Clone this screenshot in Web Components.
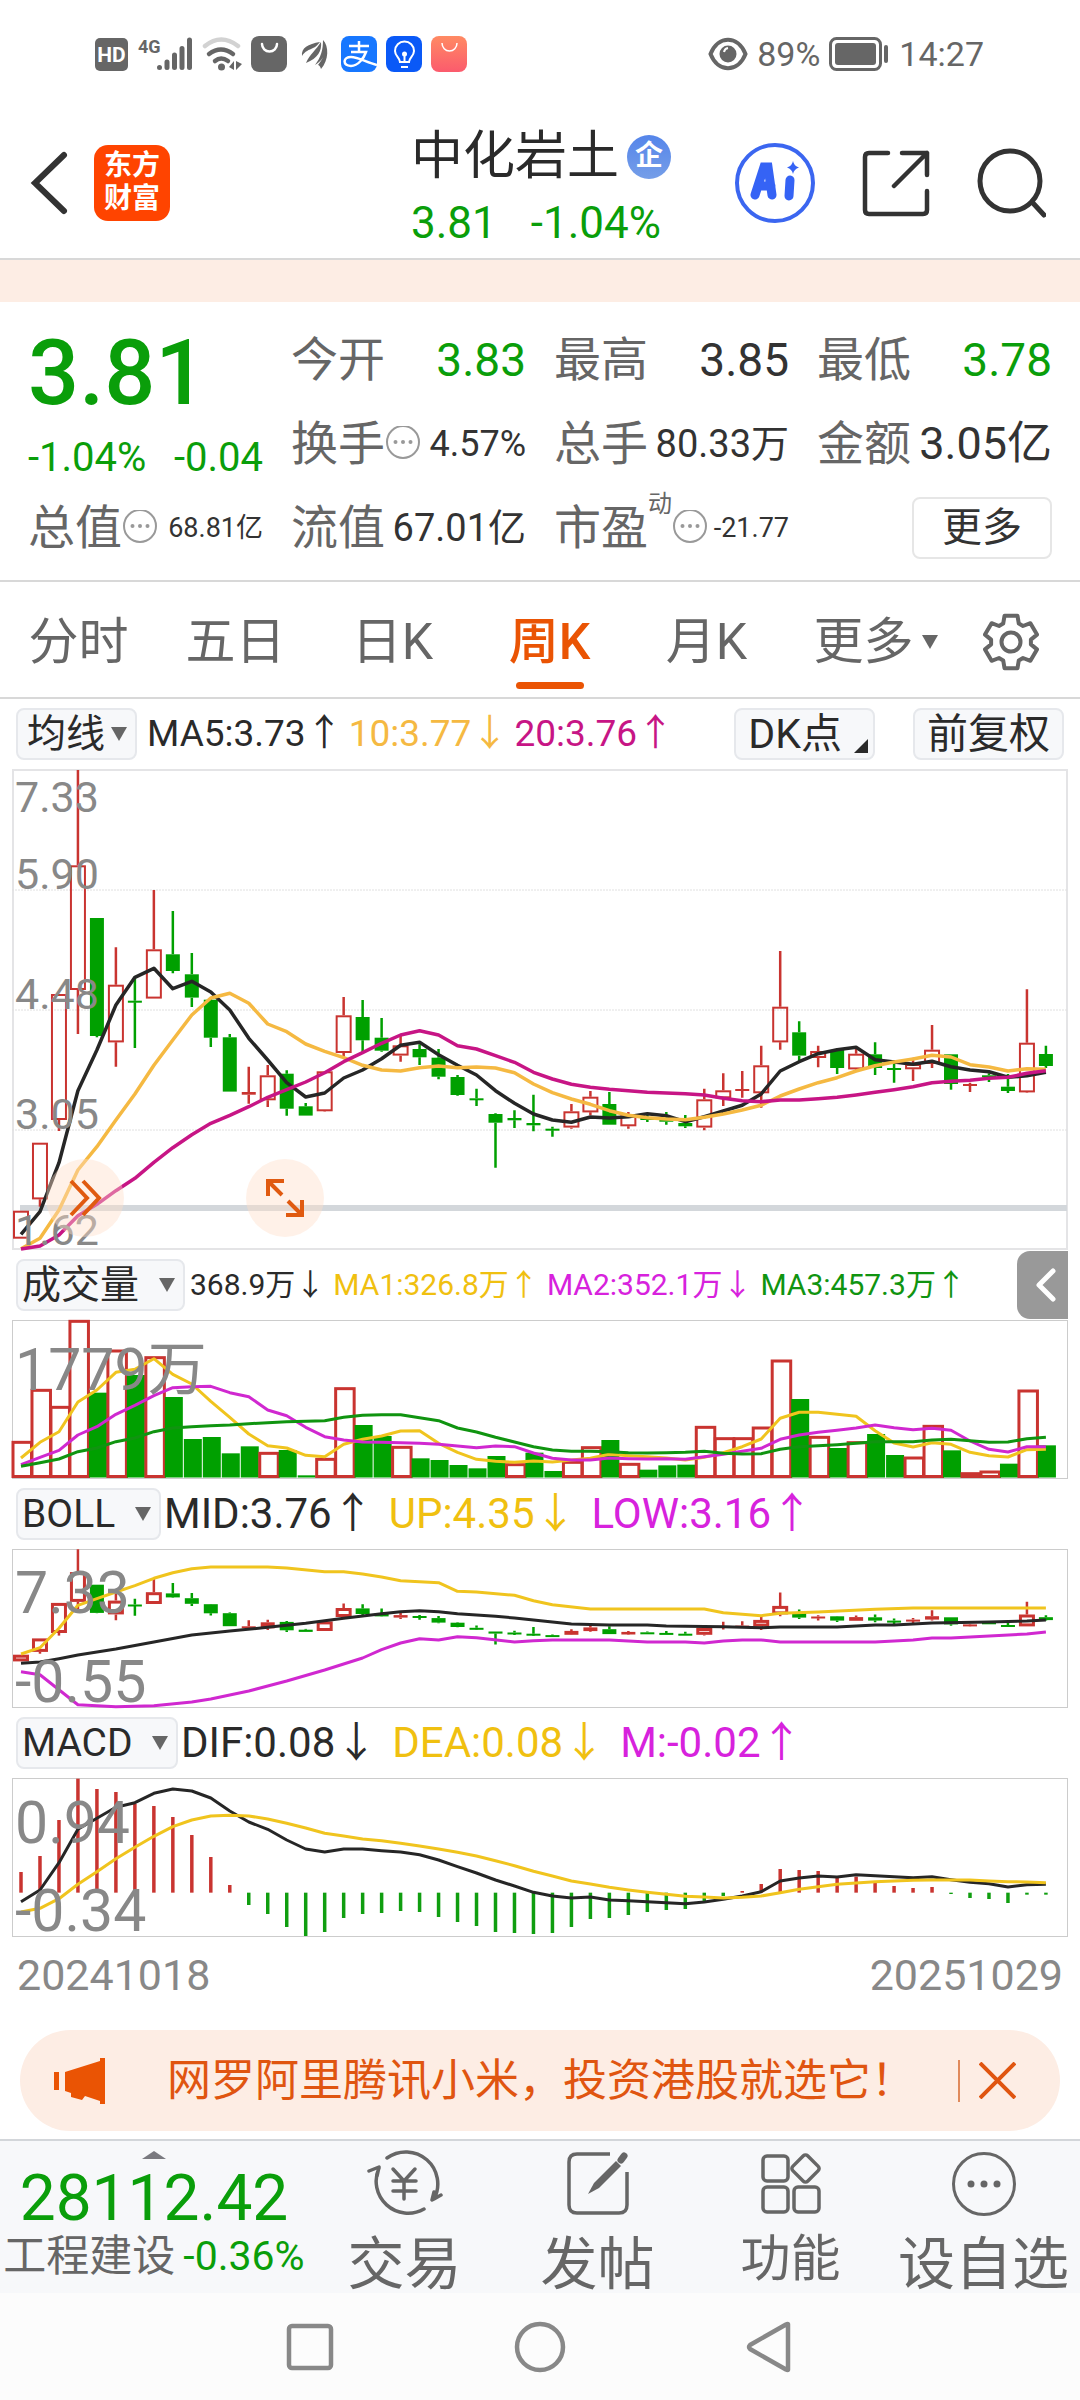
<!DOCTYPE html>
<html lang="zh-CN">
<head>
<meta charset="utf-8">
<meta name="viewport" content="width=device-width, initial-scale=1">
<title>中化岩土 3.81 -1.04%</title>
<style>
  html { background: #fcfcfc; }
  body {
    margin: 0; background: #fff; color: #2a2a2a;
    font-family: Roboto, "Noto Sans CJK SC", sans-serif;
    --green: #0a9e0a; --accent: #ea5404; --grey: #666; --rule: #d8d8d8;
  }
</style>
</head>
<body>
<stock-page></stock-page>
<script>
const BASE = `
  *{box-sizing:border-box}
  svg{display:block;flex:none}
  button{font:inherit;color:inherit;background:none;border:0;padding:0;margin:0;cursor:pointer}
`;
function define(name, css, html, setup) {
  const tpl = document.createElement('template');
  tpl.innerHTML = `<style>${BASE}${css}</style>${html}`;
  customElements.define(name, class extends HTMLElement {
    constructor() {
      super();
      this.attachShadow({ mode: 'open' }).append(tpl.content.cloneNode(true));
    }
    connectedCallback() { if (setup) setup(this, this.shadowRoot); }
  });
}

/* ---------- system bars ---------- */
define('status-bar', `
  :host{display:flex;justify-content:space-between;align-items:center;height:108px;padding:0 96px 0 95px;font-size:34px;line-height:40px;color:#666}
  .side{display:flex;align-items:center;gap:9px}
  .icons{gap:9px}
`, `
  <div class="side icons">
    <svg width="33" height="36" viewBox="0 0 33 36"><rect x="0" y="2" width="33" height="33" rx="5" fill="#666"/><text x="16.5" y="26" text-anchor="middle" font-size="21" font-weight="700" fill="#fff">HD</text></svg>
    <svg width="56" height="36" viewBox="0 0 56 36"><text x="1" y="17" font-size="18" font-weight="700" fill="#666">4G</text>
      <g stroke="#666" stroke-width="5" stroke-linecap="round"><path d="M22.500 31.500v.1M30 26v5.500M37.500 19v12.500M45 12.500v19M52.500 4v27.500"/></g></svg>
    <svg width="40" height="36" viewBox="0 0 40 36" fill="none" stroke-linecap="round" stroke-width="4.500"><path d="M3 10q16-13 33 0" stroke="#d2d2d2"/><path d="M7 18q12-9 24 0M13 25q6-5 13 0" stroke="#666"/><circle cx="19.500" cy="31" r="3.500" fill="#666"/><path d="M27 31l5-6v9zM34 25v9l6-6z" fill="#666"/></svg>
    <svg width="36" height="36" viewBox="0 0 36 36"><rect width="36" height="36" rx="8" fill="#666"/><path d="M11 8a7.500 7.500 0 0 0 15 0" fill="none" stroke="#fff" stroke-width="2.500" stroke-linecap="round"/></svg>
    <svg width="36" height="36" viewBox="0 0 36 36" fill="#666"><path d="M6 20c-1-8 6-12 18-14-2 2-4 5-7 6-4 2-8 3-11 8zM10 27c4-9 10-13 15-21 1 9-3 16-15 21zM19 29c6-8 8-15 8-25 3 6 3 12 0 17-2 4-5 6-8 8zM27 4c6 6 6 20-2 29-1-3-2-4-3-4 6-7 8-14 5-25z"/></svg>
    <svg width="36" height="36" viewBox="0 0 36 36"><rect width="36" height="36" rx="8" fill="#1777ff"/><g fill="none" stroke="#fff" stroke-width="2.500"><path d="M8 10h20M18 5v11M10 16h15c-2 6-8 14-15 14-9-1-8-9 0-9 7 0 15 5 26 8"/></g></svg>
    <svg width="36" height="36" viewBox="0 0 36 36"><rect width="36" height="36" rx="8" fill="#0a59f7"/><g fill="none" stroke="#fff" stroke-width="2"><path d="M14 26c0-4-5-6-5-11a9.500 9.500 0 0 1 19 0c0 5-5 7-5 11zM15 31h7M18.500 20v6"/></g><circle cx="18.500" cy="18" r="2.500" fill="#fff"/></svg>
    <svg width="36" height="36" viewBox="0 0 36 36"><defs><linearGradient id="g" x2="0" y2="1"><stop stop-color="#ff8a63"/><stop offset="1" stop-color="#fb5b6d"/></linearGradient></defs><rect width="36" height="36" rx="8" fill="url(#g)"/><path d="M11 7a7.500 8 0 0 0 15 0" fill="none" stroke="#fff" stroke-width="1.500"/></svg>
  </div>
  <div class="side">
    <svg width="40" height="34" viewBox="0 0 40 34"><path d="M2.500 17C10-2 30-2 37.500 17 30 36 10 36 2.500 17z" fill="none" stroke="#666" stroke-width="4"/><circle cx="20" cy="17" r="8.500" fill="#666"/><path d="M16 15a5 5 0 0 1 4-4" stroke="#fff" stroke-width="2" fill="none"/></svg>
    <span>89%</span>
    <svg width="61" height="34" viewBox="0 0 61 34"><rect x="1.500" y="1.500" width="50" height="31" rx="6" fill="none" stroke="#666" stroke-width="3"/><rect x="6" y="6" width="41" height="22" rx="3" fill="#666"/><path d="M57 10v14" stroke="#666" stroke-width="4" stroke-linecap="round"/></svg>
    <span>14:27</span>
  </div>
`);

define('nav-bar', `
  :host{display:flex;justify-content:center;align-items:center;height:108px;background:#fcfcfc}
  button{width:230px;display:flex;justify-content:center}
`, `
  <button aria-label="最近任务"><svg width="50" height="54" viewBox="0 0 50 54"><rect x="4" y="6" width="42" height="42" rx="3" fill="none" stroke="#888" stroke-width="4.500"/></svg></button>
  <button aria-label="主页"><svg width="52" height="54" viewBox="0 0 52 54"><circle cx="26" cy="27" r="23" fill="none" stroke="#888" stroke-width="4.500"/></svg></button>
  <button aria-label="返回"><svg width="50" height="54" viewBox="0 0 50 54"><path d="M43 4.500v45q0 1-2 0L5 29q-2-2 0-4L41 4.500q2-1 2 0z" fill="none" stroke="#888" stroke-width="4.500" stroke-linejoin="round"/></svg></button>
`);

/* ---------- title bar ---------- */
define('title-bar', `
  :host{display:grid;grid-template-columns:1fr auto 1fr;align-items:center;height:152px;padding:0 34px 0 28px;border-bottom:2px solid var(--rule)}
  .left{display:flex;align-items:center;gap:24px}
  .right{display:flex;align-items:center;justify-content:flex-end;gap:46px}
  button{display:block}
  .logo{width:76px;height:76px;border-radius:14px;background:#ff4400;color:#fff;font-size:28px;line-height:33px;font-weight:700;padding:4px 0 6px;text-align:center}
  h1{margin:0;font-size:52px;line-height:66px;font-weight:400;display:flex;align-items:center;gap:8px}
  .badge{width:44px;height:44px;border-radius:50%;background:linear-gradient(#5585ea,#759ee8);color:#fff;font-size:28px;line-height:42px;font-weight:700;text-align:center}
  .mid{padding:14px 0 0 8px}
  .sub{display:flex;gap:34px;font-size:44px;line-height:66px;color:var(--green)}
`, `
  <div class="left">
    <button aria-label="返回"><svg width="42" height="68" viewBox="0 0 42 68"><path d="M36 6L7 34l29 28" fill="none" stroke="#333" stroke-width="6" stroke-linecap="round"/></svg></button>
    <button class="logo">东方<br>财富</button>
  </div>
  <div class="mid">
    <h1>中化岩土<span class="badge">企</span></h1>
    <div class="sub"><span>3.81</span><span>-1.04%</span></div>
  </div>
  <div class="right">
    <button aria-label="AI"><svg width="82" height="82" viewBox="0 0 82 82"><circle cx="41" cy="41" r="38" fill="none" stroke="#3b66f0" stroke-width="4"/><g fill="none" stroke="#3563f5" stroke-linecap="round" stroke-width="9"><path d="M21 53l9-28 4 0 4 28M25 44h12"/><path d="M56 38l-1 16"/></g><path d="M59 19q1 5 6 6.500-5 1.500-6 6.500-1-5-6-6.500 5-1.500 6-6.500z" fill="#3563f5"/></svg></button>
    <button aria-label="分享"><svg width="68" height="68" viewBox="0 0 68 68" fill="none" stroke="#333" stroke-width="4.500" stroke-linecap="round" stroke-linejoin="round"><path d="M26 4H7q-4 0-4 4v53q0 4 4 4h54q4 0 4-4V42M40 4h25v22M65 4L32 37"/></svg></button>
    <button aria-label="搜索"><svg width="70" height="70" viewBox="0 0 70 70" fill="none" stroke="#333" stroke-width="5" stroke-linecap="round"><circle cx="34" cy="33" r="30"/><path d="M56 54l12 13"/></svg></button>
  </div>
`);

/* ---------- quote figures ---------- */
define('stat-cell', `
  :host{display:flex;align-items:center;height:84px;color:#333;--size:46px}
  .label{font-size:47px;line-height:60px;color:var(--grey)}
  .value{margin-left:auto;font-size:var(--size);line-height:60px;white-space:nowrap}
  .info{display:none}
  :host([info]) .info{display:block}
  :host([mid]){--size:38px}
  :host([mid][info]){--size:36px}
  :host([big]){--size:45px}
  :host([small]){--size:27px}
  :host([up]) .value{color:var(--green)}
  ::slotted(sup){align-self:flex-start;font-size:24px;line-height:36px;color:#666}
`, `
  <span class="label"><slot name="label"></slot></span><slot name="mark"></slot>
  <svg class="info" width="36" height="36" viewBox="0 0 36 36"><circle cx="18" cy="16" r="16" fill="none" stroke="#999" stroke-width="2"/><g fill="#999"><circle cx="10.500" cy="16" r="2"/><circle cx="18" cy="16" r="2"/><circle cx="25.500" cy="16" r="2"/></g></svg>
  <span class="value"><slot></slot></span>
`);

define('quote-panel', `
  :host{display:block;border-bottom:2px solid var(--rule)}
  .info{overflow:visible}
  .strip{height:42px;background:#fdede4}
  .grid{display:grid;grid-template-columns:repeat(4,1fr);column-gap:28px;padding:16px 28px 10px}
  .price{grid-row:span 2;color:var(--green);white-space:nowrap}
  .now{font-size:90px;line-height:112px;font-weight:500}
  .chg{display:flex;justify-content:space-between;font-size:40px;line-height:56px}
  .more{align-self:center;justify-self:end;width:140px;height:62px;border:2px solid #e6e6e6;border-radius:8px;font-size:40px;line-height:56px;color:#333}
`, `
  <div class="strip"></div>
  <div class="grid">
    <div class="price"><div class="now">3.81</div><div class="chg"><span>-1.04%</span><span>-0.04</span></div></div>
    <stat-cell up><span slot="label">今开</span>3.83</stat-cell>
    <stat-cell><span slot="label">最高</span>3.85</stat-cell>
    <stat-cell up><span slot="label">最低</span>3.78</stat-cell>
    <stat-cell info mid><span slot="label">换手</span>4.57%</stat-cell>
    <stat-cell mid><span slot="label">总手</span>80.33万</stat-cell>
    <stat-cell big><span slot="label">金额</span>3.05亿</stat-cell>
    <stat-cell info small><span slot="label">总值</span>68.81亿</stat-cell>
    <stat-cell mid><span slot="label">流值</span>67.01亿</stat-cell>
    <stat-cell info small><span slot="label">市盈</span><sup slot="mark">动</sup>-21.77</stat-cell>
    <button class="more">更多</button>
  </div>
`);

/* ---------- period tabs ---------- */
define('period-tabs', `
  :host{display:grid;grid-template-columns:repeat(6,157fr) 138fr;height:117px;border-bottom:2px solid var(--rule);font-size:50px;line-height:60px;color:var(--grey)}
  button{display:flex;align-items:center;justify-content:center;gap:8px;position:relative;white-space:nowrap;padding-top:4px}
  .on{color:var(--accent);font-weight:500}
  .on::after{content:"";position:absolute;left:50%;bottom:8px;width:68px;height:7px;margin-left:-34px;border-radius:4px;background:var(--accent)}
  .drop{padding-left:24px}
`, `
  <button>分时</button><button>五日</button><button>日K</button><button class="on">周K</button><button>月K</button>
  <button class="drop">更多<svg width="16" height="14" viewBox="0 0 16 14"><path d="M0 0h16l-8 14z" fill="#666"/></svg></button>
  <button aria-label="设置"><svg width="60" height="60" viewBox="-30 -30 60 60" fill="none" stroke="#666" stroke-width="4" stroke-linejoin="round"><path class="gear"/><circle r="9.500"/></svg></button>
`, (host, root) => {
  const pts = [];
  for (let k = 0; k < 6; k++)
    for (const [a, r] of [[-23, 20], [-14, 27], [14, 27], [23, 20]]) {
      const t = (k * 60 - 90 + a) * Math.PI / 180;
      pts.push((r * Math.cos(t)).toFixed(1) + ' ' + (r * Math.sin(t)).toFixed(1));
    }
  root.querySelector('.gear').setAttribute('d', 'M' + pts.join('L') + 'z');
});

/* ---------- indicator rows ---------- */
define('indicator-picker', `
  :host{display:grid;flex:none;align-items:center;font-size:39px;--gap:17px;--pad:4px}
  :host([tight]){--gap:3px;--pad:9px}
  select{grid-area:1/1;appearance:none;font:inherit;color:#2a2a2a;height:52px;line-height:48px;margin:0;padding:0 calc(26px + var(--gap)) 0 var(--pad);background:#f7f8fa;border:2px solid #e6e8ec;border-radius:8px}
  svg{grid-area:1/1;justify-self:end;margin-right:10px;pointer-events:none}
`, `<select></select><svg width="16" height="14" viewBox="0 0 16 14"><path d="M0 0h16l-8 14z" fill="#666"/></svg>`,
(host, root) => {
  const s = root.querySelector('select');
  s.setAttribute('aria-label', '指标');
  s.add(new Option(host.getAttribute('value')));
});

define('indicator-row', `
  :host{display:flex;align-items:center;height:70px;padding-left:16px;white-space:nowrap}
  .vals{display:flex;gap:15px;font-size:42px;line-height:60px;padding-left:3px}
  :host([ma]) .vals{font-size:37px;gap:6px;padding-left:10px}
  :host([vol]) .vals{font-size:30px;gap:8px;padding-left:5px}
  .end{display:flex;margin-left:auto}
`, `<slot name="pick"></slot><div class="vals"><slot></slot></div><div class="end"><slot name="end"></slot></div>`);

define('chip-button', `
  :host{display:block;margin-right:16px}
  :host([corner]){margin-right:38px}
  button{display:flex;align-items:flex-end;height:52px;padding:0 12px;font-size:41px;line-height:48px;border:2px solid #e6e8ec;border-radius:8px;background:#f7f8fa}
  svg{display:none}
  :host([corner]) button{padding-right:5px}
  :host([corner]) svg{display:block;margin:0 0 5px 12px}
`, `<button><slot></slot><svg width="14" height="14" viewBox="0 0 14 14"><path d="M14 0v14H0z" fill="#2a2a2a"/></svg></button>`);

define('side-tab', `
  :host{display:block;margin-right:12px}
  button{display:flex;align-items:center;justify-content:center;width:51px;height:68px;border-radius:13px 0 0 13px;background:#999;padding-left:6px}
`, `<button aria-label="展开"><svg width="24" height="36" viewBox="0 0 24 36"><path d="M19 4L5 18l14 14" fill="none" stroke="#fff" stroke-width="5" stroke-linecap="round" stroke-linejoin="round"/></svg></button>`);

/* ---------- charts: y values are thirds of a pixel ---------- */
const X = i => 9 + 18.98 * i;
const RED = '#c93430', GREEN = '#00a000';
// colour, high, low, body top, body bottom
const candles = `r 1352 1436 1352 1436|r 1148 1340 1148 1318|r 702 1113 702 1080|r 30 822 316 690|g 474 832 474 828|r 562 920 674 847|g 650 864 722 727|r 390 716 568 716|g 453 640 583 633|g 579 741 643 713|g 716 861 719 833|g 822 995 832 995|r 920 1031 996 1004|r 915 1041 946 1021|g 931 1067 941 1046|g 1029 1067 1039 1067|r 934 1055 934 1054|r 711 890 766 879|g 720 877 771 841|g 774 875 833 872|r 825 905 856 887|g 853 915 867 892|g 867 958 893 950|g 945 1007 951 1005|g 986 1038 1015 1020|g 1060 1223 1062 1088|g 1051 1104 1074 1081|g 1004 1114 1089 1096|g 1100 1130 1106 1111|r 1032 1106 1054 1103|r 993 1066 1010 1057|g 996 1094 1032 1094|r 1056 1106 1066 1099|g 1060 1086 1072 1080|g 1056 1094 1079 1085|g 1065 1104 1089 1099|r 986 1111 1018 1103|r 940 1038 991 1015|r 933 1013 987 993|r 857 1043 916 1000|r 573 869 740 847|g 784 905 817 887|r 857 922 873 894|g 866 942 870 924|r 862 930 881 928|g 847 945 883 924|g 900 968 924 928|r 893 963 912 928|r 795 924 869 912|g 883 989 883 972|r 968 996 972 978|g 940 966 946 952|g 942 999 980 993|r 688 998 848 997|g 857 924 882 918`
  .split('|').map(s => { const [c, ...v] = s.split(' '); return [c, ...v.map(Number)]; });
const dense = s => s.split(' ').map((v, i) => [i, +v]);
const sparse = s => s.split(' ').map(p => p.split(',').map(Number));
const line = (pts, y, color, w = 3.5) =>
  `<polyline fill="none" stroke="${color}" stroke-width="${w}" stroke-linejoin="round" points="${pts.map(([i, v]) => X(i).toFixed(1) + ',' + y(v).toFixed(1)).join(' ')}"/>`;
const drawCandles = (y, sw) => candles.map(([c, h, l, t, b], i) => {
  const x = X(i), col = c === 'r' ? RED : GREEN, Y = v => y(v).toFixed(1);
  const wick = `<path stroke="${col}" stroke-width="2.500" d="M${x} ${Y(h)}V${Y(t)}M${x} ${Y(b)}V${Y(l)}"/>`;
  const bh = y(b) - y(t);
  if (c === 'g' || bh < 2 * sw)
    return wick + `<rect x="${x - 7}" y="${Y(t)}" width="14" height="${Math.max(2, bh).toFixed(1)}" fill="${col}"/>`;
  return wick + `<rect x="${x - 8 + sw / 2}" y="${(y(t) + sw / 2).toFixed(1)}" width="${16 - sw}" height="${(bh - sw).toFixed(1)}" fill="none" stroke="${col}" stroke-width="${sw}"/>`;
}).join('');
const tag = (y, s, size) => `<text x="3" y="${y}" font-size="${size}" fill="#888">${s}</text>`;

const charts = {
  price() {
    const y = v => (v - 27) / 3;
    return [481, 2, '#e4e4e6',
      [121, 241, 361].map(g => `<path d="M0 ${g}H1056" stroke="#e0e0e0" stroke-dasharray="2 1"/>`).join('')
      + `<path d="M8 439H1055" stroke="#d3d7db" stroke-width="6"/>`
      + drawCandles(y, 2)
      + line(dense('1423 1355 1208 992 870 735 652 625 686 664 696 750 835 900 968 1011 999 954 930 896 856 847 884 916 945 992 1030 1062 1080 1087 1071 1074 1070 1061 1067 1085 1070 1053 1036 1002 933 905 881 869 862 899 906 913 904 920 930 935 952 947 937'), y, '#262626')
      + line(dense('1466 1435 1350 1230 1160 1080 1002 916 840 765 714 700 730 792 815 852 874 893 916 930 933 923 918 923 921 924 938 972 998 1017 1033 1052 1066 1073 1077 1079 1072 1062 1050 1036 1008 987 968 953 933 917 906 897 886 891 914 921 933 926 928'), y, '#f5b942')
      + line(dense('1467 1458 1425 1367 1333 1292 1255 1207 1163 1124 1090 1066 1040 1012 989 966 938 905 878 850 825 812 825 857 867 887 907 937 957 973 982 988 992 997 999 1001 1005 1015 1022 1025 1020 1020 1016 1012 1005 997 989 980 968 964 961 955 952 940 932'), y, '#c71585')
      + tag(43, '7.33', 43) + tag(120, '5.90', 43) + tag(240, '4.48', 43) + tag(360, '3.05', 43) + tag(476, '1.62', 43)];
  },
  volume() {
    const y = v => (v - 240) / 3;
    const bars = 'r604 r448 r499 r241 g458 r330 g405 r350 g471 g597 g591 g640 g619 r637 g630 g706 r655 r443 g555 g588 r619 g655 g660 g675 g685 g648 r671 g638 g693 r664 r620 g600 r670 g689 g676 g674 r559 r593 r593 r561 r360 g477 r589 g624 r605 g582 g645 r651 r556 g631 r698 r693 g671 r450 g616'.split(' ');
    return [159, 1, '#ccc', bars.map((s, i) => {
      const t = y(+s.slice(1)), x = X(i), b = 157.5;
      return s[0] === 'g'
        ? `<rect x="${x - 8}" y="${t}" width="18" height="${b - t}" fill="${GREEN}"/>`
        : `<rect x="${x - 8}" y="${t + 1}" width="18.500" height="${b - t - 2}" fill="#fff" stroke="${RED}" stroke-width="3"/>`;
    }).join('')
      + line(dense('654 607 575 486 450 397 388 356 403 432 484 532 582 617 624 646 650 613 598 588 573 572 610 637 658 664 667 663 666 660 655 643 647 650 654 660 652 638 620 597 535 517 517 523 529 572 609 621 608 613 637 647 651 629 628'), y, '#f0c41e', 3)
      + line(dense('674 652 631 585 560 523 496 467 443 440 439 458 470 510 527 562 590 600 606 607 608 610 613 618 623 618 620 639 655 660 660 654 656 657 656 658 650 643 634 625 598 585 577 571 564 555 563 569 565 571 603 628 636 620 620'), y, '#d028d0', 3)
      + line(dense('679 668 657 635 624 605 594 575 564 560 557 555 551 548 545 544 542 532 526 524 524 533 542 564 576 592 606 620 630 634 634 635 638 639 638 637 634 640 642 641 628 620 617 614 610 605 605 605 600 598 602 607 606 596 592'), y, '#109410', 3)
      + tag(70, '1779万', 59)];
  },
  boll() {
    const y = v => (v - 927) / 3, yc = v => y(928 + (v - 30) * 0.239);
    return [159, 1, '#ccc', drawCandles(yc, 3)
      + line(sparse('0,1242 1,1223 2,1165 3,1096 4,1076 5,1056 6,1037 7,1015 8,998 9,986 10,981 13,981 14,984 16,995 17,995 18,1002 19,1011 20,1022 22,1028 23,1054 24,1056 26,1066 27,1082 28,1094 30,1107 36,1107 37,1118 39,1127 40,1120 42,1116 45,1108 47,1104 54,1104'), y, '#f0c41e', 3)
      + line(sparse('0,1270 1,1266 2,1256 3,1245 5,1227 7,1206 9,1185 11,1173 13,1162 15,1150 17,1135 19,1121 20,1115 21,1112 22,1115 23,1121 25,1129 26,1134 27,1140 28,1146 29,1152 31,1155 33,1155 34,1158 37,1160 39,1163 40,1161 43,1161 45,1155 46,1155 48,1149 51,1146 53,1143 54,1140'), y, '#262626', 3)
      + line(sparse('0,1295 1,1304 3,1394 5,1400 7,1397 9,1386 10,1377 12,1353 14,1323 16,1290 18,1254 19,1229 20,1209 21,1196 22,1200 23,1190 24,1193 26,1206 27,1202 28,1200 31,1200 33,1206 35,1206 36,1209 37,1203 38,1200 39,1200 40,1206 45,1206 47,1200 48,1194 49,1194 53,1182 54,1176'), y, '#d028d0', 3)
      + tag(64, '7.33', 59) + tag(153, '-0.55', 59)];
  },
  macd() {
    const y = v => (v - 234) / 3, z = y(578);
    const ends = dense('516 468 360 236 267 276 311 318 351 405 471 555 615 642 681 708 696 654 642 639 633 636 651 666 678 696 699 702 699 681 657 654 645 636 630 627 604 588 573 552 507 510 513 528 530 546 558 564 561 582 594 597 609 584 584');
    return [159, 1, '#ccc', ends.map(([i, v]) =>
      `<path d="M${X(i)} ${z}V${y(v)}" stroke="${v < 578 ? RED : '#109e10'}" stroke-width="3.500"/>`).join('')
      + line(dense('605 570 488 388 355 322 308 280 267 273 294 333 366 388 420 447 456 447 447 452 456 464 480 500 519 540 558 577 588 594 591 600 602 605 608 611 606 598 588 575 543 534 528 531 524 527 530 533 530 539 547 551 561 554 553'), y, '#262626', 3)
      + line(dense('636 625 596 553 515 476 442 409 380 360 348 346 348 357 370 384 400 408 417 422 430 438 447 457 468 482 497 514 528 543 552 562 570 577 583 589 591 594 592 588 578 568 560 553 549 545 543 541 540 540 540 543 545 546 548'), y, '#f0c41e', 3)
      + tag(65, '0.94', 59) + tag(153, '-0.34', 59)];
  },
};
define('stock-chart', `
  :host{display:block;margin:0 12px;position:relative}
  svg{width:100%;height:auto;overflow:visible}
`, `<svg></svg><slot></slot>`, (host, root) => {
  const [h, bw, color, body] = charts[host.getAttribute('kind')]();
  const svg = root.querySelector('svg');
  svg.setAttribute('viewBox', `0 0 1056 ${h}`);
  svg.innerHTML = `<rect x="${bw / 2}" y="${bw / 2}" width="${1056 - bw}" height="${h - bw}" fill="none" stroke="${color}" stroke-width="${bw}"/>` + body;
});

define('round-tool', `
  :host{position:absolute;bottom:13px}
  button{display:flex;align-items:center;justify-content:center;width:78px;height:78px;border-radius:50%;background:rgba(255,222,200,.42)}
`, `<button><slot></slot></button>`);

/* ---------- notice and bottom bar ---------- */
define('notice-banner', `
  :host{display:flex;align-items:center;margin:0 20px 8px;height:101px;border-radius:51px;background:#fdede4;color:#e05510;font-size:44px;line-height:60px;padding:0 44px 0 34px}
  .text{margin-left:61px;white-space:nowrap}
  .close{margin-left:auto;border-left:2px solid #e08a5c;padding-left:19px;height:42px;display:flex;align-items:center}
`, `
  <svg width="52" height="46" viewBox="0 0 52 46" fill="#ea5404"><path d="M0 14h5v18H0zM11 14L46 3V0h5v46h-5v-3L31 38l-3 4-11-3v-4l-6-2z"/></svg>
  <span class="text"><slot></slot></span>
  <button class="close" aria-label="关闭"><svg width="37" height="37" viewBox="0 0 37 37"><path d="M1 1l35 35M36 1L1 36" stroke="#e05510" stroke-width="4"/></svg></button>
`);

define('bottom-bar', `
  :host{display:grid;grid-template-columns:308fr repeat(4,193fr);height:154px;border-top:2px solid #d3d6da;background:#f7f8fa;overflow:hidden;color:#666}
  .index{text-align:center;font-size:64px;color:var(--green);display:flex;flex-direction:column;align-items:center;justify-content:flex-start;padding-top:10px}
  .index b{font-weight:400;line-height:72px;padding-top:4px}
  .index div{display:flex;gap:8px;font-size:41px;line-height:42px;white-space:nowrap}
  .name{color:#666;font-size:43px}
`, `
  <button class="index"><svg width="24" height="8" viewBox="0 0 24 8"><path d="M0 8L12 0l12 8z" fill="#7a7a80"/></svg><b>28112.42</b><div><span class="name">工程建设</span><span>-0.36%</span></div></button>
  <slot></slot>
`);
define('bar-item', `
  :host{display:block;overflow:hidden;font-size:57px}
  :host([small]){font-size:50px}
  button{width:100%;display:flex;flex-direction:column;align-items:center;padding-top:9px;white-space:nowrap}
  span{line-height:94px}
  :host([small]) span{line-height:82px}
`, `<button><slot name="icon"></slot><span><slot></slot></span></button>`);

/* ---------- page ---------- */
define('stock-page', `
  :host{display:block}
  .k{color:#2a2a2a}.y{color:#f5b942}.p{color:#c71585}.g{color:#109410}.o{color:#f0c010}.m{color:#d722dd}
  .dates{display:flex;justify-content:space-between;padding:8px 17px 25px;font-size:43px;line-height:60px;color:#888}
  .next{left:34px}.full{left:234px}
`, `
  <status-bar></status-bar>
  <title-bar></title-bar>
  <quote-panel></quote-panel>
  <period-tabs></period-tabs>
  <indicator-row ma>
    <indicator-picker tight slot="pick" value="均线"></indicator-picker>
    <span class="k">MA5:3.73↑</span><span class="y">10:3.77↓</span><span class="p">20:3.76↑</span>
    <chip-button corner slot="end">DK点</chip-button><chip-button slot="end">前复权</chip-button>
  </indicator-row>
  <stock-chart kind="price">
    <round-tool class="next"><svg width="34" height="38" viewBox="0 0 34 38"><path d="M3 2l16 17L3 36M15 2l16 17-16 17" fill="none" stroke="#e05a10" stroke-width="4"/></svg></round-tool>
    <round-tool class="full"><svg width="38" height="38" viewBox="0 0 38 38"><path d="M2 17V2h16M2 2l14 14M36 21v15H20M36 36L22 22" fill="none" stroke="#e05a10" stroke-width="4"/></svg></round-tool>
  </stock-chart>
  <indicator-row vol>
    <indicator-picker slot="pick" value="成交量"></indicator-picker>
    <span class="k">368.9万↓</span><span class="o">MA1:326.8万↑</span><span class="m">MA2:352.1万↓</span><span class="g">MA3:457.3万↑</span>
    <side-tab slot="end"></side-tab>
  </indicator-row>
  <stock-chart kind="volume"></stock-chart>
  <indicator-row>
    <indicator-picker slot="pick" value="BOLL"></indicator-picker>
    <span class="k">MID:3.76↑</span><span class="o">UP:4.35↓</span><span class="m">LOW:3.16↑</span>
  </indicator-row>
  <stock-chart kind="boll"></stock-chart>
  <indicator-row>
    <indicator-picker slot="pick" value="MACD"></indicator-picker>
    <span class="k">DIF:0.08↓</span><span class="o">DEA:0.08↓</span><span class="m">M:-0.02↑</span>
  </indicator-row>
  <stock-chart kind="macd"></stock-chart>
  <div class="dates"><span>20241018</span><span>20251029</span></div>
  <notice-banner>网罗阿里腾讯小米，投资港股就选它！</notice-banner>
  <bottom-bar>
    <bar-item>交易<svg slot="icon" width="76" height="68" viewBox="0 0 76 68" fill="none" stroke="#666" stroke-width="3.500" stroke-linecap="round" stroke-linejoin="round"><path d="M20 8A32 32 0 0 1 67 49M67 49l-2 1 2-8M67 49l7-4M57 59A32 32 0 0 1 12 18M2 21l10-4-2 9"/><path d="M26 19l11 12 11-12M37 31v18M26 31h23M26 41h23"/></svg></bar-item>
    <bar-item>发帖<svg slot="icon" width="62" height="68" viewBox="0 0 62 68" fill="none" stroke="#666" stroke-width="3.500"><path d="M43 4H10q-8 0-8 8v43q0 8 8 8h42q8 0 8-8V22"/><path d="M21 44l6-11 22-22 5 5-22 22z" fill="#666" stroke="none"/><path d="M54 10l3-4" stroke-width="7" stroke-linecap="round"/></svg></bar-item>
    <bar-item small>功能<svg slot="icon" width="60" height="68" viewBox="0 0 60 68" fill="none" stroke="#666" stroke-width="3.500"><rect x="2" y="6" width="25" height="25" rx="4"/><rect x="2" y="37" width="25" height="25" rx="4"/><rect x="33" y="37" width="25" height="25" rx="4"/><rect x="34" y="8" width="21" height="21" rx="3" transform="rotate(45 44.500 18.500)"/></svg></bar-item>
    <bar-item>设自选<svg slot="icon" width="66" height="68" viewBox="0 0 66 68"><circle cx="33" cy="34" r="30.500" fill="none" stroke="#666" stroke-width="3"/><g fill="#666"><circle cx="20" cy="34" r="3.500"/><circle cx="33" cy="34" r="3.500"/><circle cx="46" cy="34" r="3.500"/></g></svg></bar-item>
  </bottom-bar>
  <nav-bar></nav-bar>
`);
</script>
</body>
</html>
